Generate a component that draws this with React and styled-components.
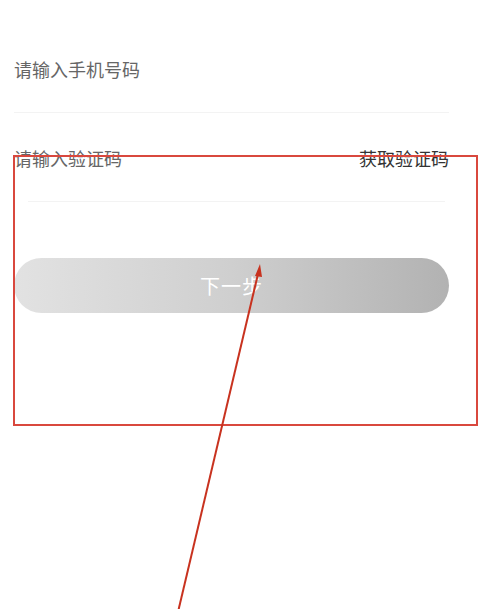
import React from "react";
import styled, { createGlobalStyle } from "styled-components";

const GlobalStyle = createGlobalStyle`
  html, body {
    margin: 0;
    padding: 0;
    background: #ffffff;
    font-family: "Noto Sans CJK SC", "Noto Sans", sans-serif;
  }
`;

const Page = styled.div`
  position: relative;
  width: 500px;
  height: 609px;
  overflow: hidden;
  background: #fff;
`;

const Form = styled.div`
  display: flex;
  flex-direction: column;
  width: 435px;
  margin-left: 14px;
  padding-top: 25px;
`;

const Field = styled.div`
  display: flex;
  align-items: center;
  justify-content: space-between;
  height: 88px;
  position: relative;
  &::after {
    content: "";
    position: absolute;
    bottom: 0;
    left: ${(p) => p.$insetLeft || 0}px;
    right: ${(p) => p.$insetRight || 0}px;
    height: 1px;
    background: #f3f3f3;
  }
  & + & {
    margin-top: 1px;
  }
`;

const Placeholder = styled.span`
  font-size: 18px;
  color: #666;
  line-height: 1;
`;

const CodeLink = styled.span`
  font-size: 18px;
  color: #333;
  line-height: 1;
`;

const NextButton = styled.button`
  margin-top: 56px;
  height: 55px;
  border: none;
  border-radius: 28px;
  background: linear-gradient(90deg, #e2e2e2 0%, #cfcfcf 50%, #b2b2b2 100%);
  color: #fff;
  font-family: inherit;
  font-size: 20px;
  letter-spacing: 1px;
`;

const Annotation = styled.div`
  position: absolute;
  left: 13px;
  top: 155px;
  width: 461px;
  height: 267px;
  border: 2px solid #d9483e;
  pointer-events: none;
`;

const Arrow = styled.svg`
  position: absolute;
  left: 0;
  top: 0;
  pointer-events: none;
`;

export default function App() {
  return (
    <Page>
      <GlobalStyle />
      <Form>
        <Field>
          <Placeholder>请输入手机号码</Placeholder>
        </Field>
        <Field $insetLeft={14} $insetRight={4}>
          <Placeholder>请输入验证码</Placeholder>
          <CodeLink>获取验证码</CodeLink>
        </Field>
        <NextButton>下一步</NextButton>
      </Form>
      <Annotation />
      <Arrow width="500" height="609" viewBox="0 0 500 609">
        <line x1="178" y1="612" x2="258" y2="274" stroke="#c8321f" strokeWidth="2" />
        <polygon points="260,264 255,276 262,277" fill="#c8321f" />
      </Arrow>
    </Page>
  );
}
